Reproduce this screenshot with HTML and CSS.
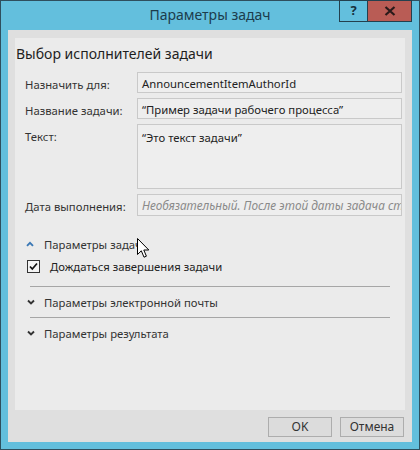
FILE: index.html
```html
<!DOCTYPE html>
<html lang="ru">
<head>
<meta charset="utf-8">
<title>Параметры задач</title>
<link rel="stylesheet" href="styles.css">
</head>
<body>
<div class="window">
  <div class="titlebar">
    <div class="title">Параметры задач</div>
    <div class="tb-buttons">
      <div class="tb-help">?</div>
      <div class="tb-close">
        <svg width="12" height="10" viewBox="0 0 12 10"><path d="M1.5 1 L10.5 9 M10.5 1 L1.5 9" stroke="#2a1a1a" stroke-width="2.2" fill="none"/></svg>
      </div>
    </div>
  </div>
  <div class="client">
    <div class="panel">
      <div class="heading">Выбор исполнителей задачи</div>
      <div class="form">
        <div class="label">Назначить для:</div>
        <div class="field">AnnouncementItemAuthorId</div>
        <div class="label">Название задачи:</div>
        <div class="field">“Пример задачи рабочего процесса”</div>
        <div class="label">Текст:</div>
        <div class="field area">“Это текст задачи”</div>
        <div class="label">Дата выполнения:</div>
        <div class="field placeholder">Необязательный. После этой даты задача станет просроченной.</div>
      </div>
      <div class="sec-row first">
        <svg class="chev" width="8" height="6" viewBox="0 0 8 6"><path d="M1 4.8 L4 1.8 L7 4.8" stroke="#3b78b5" stroke-width="1.9" fill="none"/></svg>
        <span>Параметры задач</span>
      </div>
      <div class="check-row">
        <svg class="checkbox" width="13" height="13" viewBox="0 0 13 13"><rect x="0.5" y="0.5" width="12" height="12" fill="#f4f4f4" stroke="#333"/><path d="M3 6.5 L5.3 9 L10 3.5" stroke="#111" stroke-width="1.7" fill="none"/></svg>
        <span>Дождаться завершения задачи</span>
      </div>
      <div class="sep"></div>
      <div class="sec-row">
        <svg class="chev down" width="8" height="6" viewBox="0 0 8 6"><path d="M1 1.5 L4 4.5 L7 1.5" stroke="#333" stroke-width="1.9" fill="none"/></svg>
        <span>Параметры электронной почты</span>
      </div>
      <div class="sep"></div>
      <div class="sec-row">
        <svg class="chev down" width="8" height="6" viewBox="0 0 8 6"><path d="M1 1.5 L4 4.5 L7 1.5" stroke="#333" stroke-width="1.9" fill="none"/></svg>
        <span>Параметры результата</span>
      </div>
    </div>
    <div class="footer">
      <div class="btn">OK</div>
      <div class="btn">Отмена</div>
    </div>
  </div>
  <svg class="cursor" width="13" height="21" viewBox="0 0 13 21"><path d="M0.5 0.5 L0.5 16.5 L4.3 12.8 L7 19.2 L9.4 18.2 L6.8 12 L11.8 12 Z" fill="#fff" stroke="#000" stroke-width="1" stroke-linejoin="miter"/></svg>
</div>
</body>
</html>
```

FILE: styles.css
```css
html, body {
  margin: 0;
  padding: 0;
  background: #ffffff;
}
body {
  font-family: "Noto Sans", "Open Sans", sans-serif;
  color: #2b2b2b;
}
.window {
  position: relative;
  width: 420px;
  height: 450px;
  box-sizing: border-box;
  border: 1px solid #2f4f5e;
  background: #63bfdd;
  padding: 0 7px 7px 7px;
  display: flex;
  flex-direction: column;
}
.titlebar {
  height: 29px;
  position: relative;
  flex: none;
}
.title {
  position: absolute;
  left: -8px;
  right: -8px;
  top: 4px;
  text-align: center;
  font-size: 14px;
  line-height: 20px;
  color: #1c3c4c;
}
.tb-buttons {
  position: absolute;
  right: 0;
  top: -1px;
  display: flex;
}
.tb-help {
  width: 27px;
  height: 20px;
  border: 1px solid #23404e;
  border-right: none;
  box-sizing: content-box;
  text-align: center;
  font-weight: bold;
  font-size: 13px;
  line-height: 19px;
  color: #16303c;
}
.tb-close {
  width: 43px;
  height: 20px;
  border: 1px solid #23404e;
  background: #b95c55;
  display: flex;
  align-items: center;
  justify-content: center;
}
.client {
  flex: 1;
  background: #dfdfdf;
  display: flex;
  flex-direction: column;
  padding: 8px 7px 0 7px;
}
.panel {
  height: 372px;
  background: #ebebeb;
  display: flex;
  flex-direction: column;
  flex: none;
}
.heading {
  font-size: 14px;
  line-height: 20px;
  margin-top: 6px;
  padding-left: 1px;
  color: #1e1e1e;
}
.form {
  margin-top: 8px;
  margin-left: 10px;
  display: grid;
  grid-template-columns: 112px 265px;
  grid-template-rows: 21px 21px 65px 22px;
  row-gap: 5px;
}
.label {
  font-size: 11.3px;
  line-height: 21px;
  padding-top: 2px;
  color: #333;
}
.field {
  box-sizing: border-box;
  border: 1px solid #c9c9c9;
  background: #eeeeee;
  font-size: 11.3px;
  line-height: 19px;
  padding: 1px 4px 0 4px;
  color: #222;
  white-space: nowrap;
  overflow: hidden;
}
.field.area {
  padding-top: 3px;
}
.field.placeholder {
  font-style: italic;
  font-size: 11.8px;
  color: #8a8a8a;
  padding-top: 1px;
  padding-right: 2px;
}
.sec-row {
  height: 20px;
  display: flex;
  align-items: center;
  margin-top: 5px;
  font-size: 11.3px;
  color: #333;
}
.sec-row.first {
  margin-top: 18px;
}
.chev {
  margin-left: 11px;
  margin-right: 10px;
  flex: none;
}
.chev.down {
  margin-left: 12px;
  margin-right: 9px;
}
.check-row {
  height: 20px;
  display: flex;
  align-items: center;
  margin-top: 2px;
  font-size: 11.3px;
  color: #222;
}
.checkbox {
  margin-left: 12px;
  margin-right: 10px;
  flex: none;
}
.sep {
  height: 1px;
  background: #a6a6a6;
  margin: 10px 0 0 15px;
  width: 360px;
}
.sep + .sec-row {
  margin-top: 5px;
}
.sec-row + .sep {
  margin-top: 5px;
}
.footer {
  height: 32px;
  display: flex;
  justify-content: flex-end;
  align-items: flex-start;
  gap: 8px;
  padding: 7px 1px 0 0;
  box-sizing: border-box;
}
.btn {
  width: 64px;
  height: 20px;
  box-sizing: border-box;
  border: 1px solid #adadad;
  background: #dcdcdc;
  font-size: 12px;
  line-height: 18px;
  text-align: center;
  color: #333;
}
.cursor {
  position: absolute;
  left: 136px;
  top: 237px;
}
```
